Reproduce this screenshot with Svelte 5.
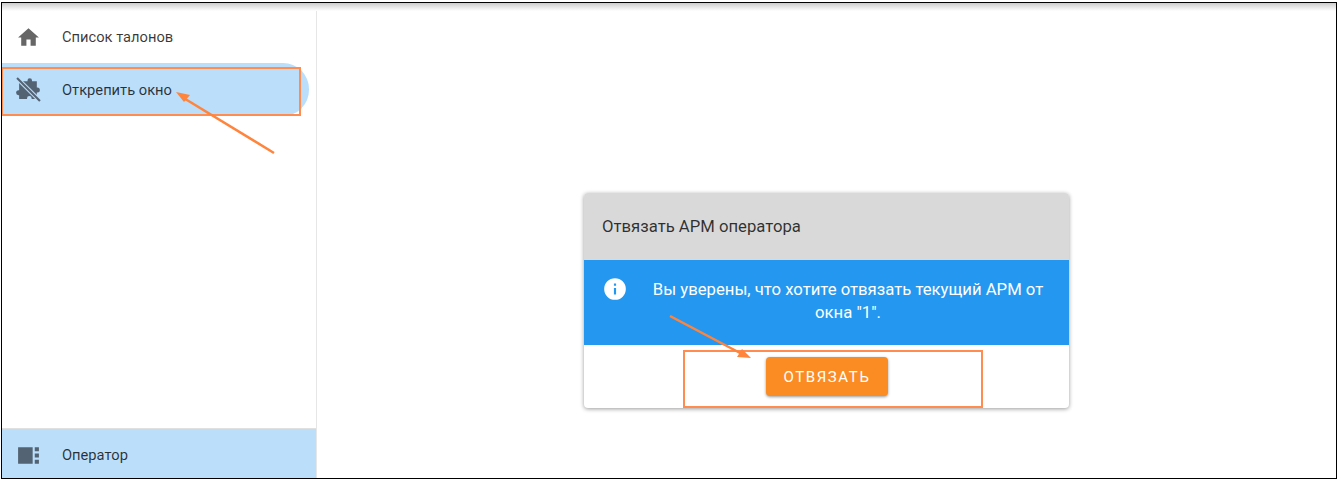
<script>
  const menu = [
    { label: "Список талонов", icon: "M10,20V14H14V20H19V12H22L12,3L2,12H5V20H10Z", active: false },
    { label: "Открепить окно", icon: "puzzle", active: true }
  ];
  const puzzle = "M3 4H11V3.5A2.2 2.2 0 0 1 15.4 3.5V4H20V10H20.5A2.4 2.4 0 0 1 20.5 14.8H20V21H15V20.5A2.2 2.2 0 0 0 10.6 20.5V21H3V17.4H2.5A2.4 2.4 0 0 1 2.5 12.6H3Z";
</script>

<div class="frame">
  <aside class="sidebar">
    <nav class="menu">
      {#each menu as item}
        <div class="item" class:active={item.active}>
          {#if item.icon === "puzzle"}
            <svg class="icon" viewBox="0 0 24 24">
              <path d={puzzle} />
              <path class="slash-bg" d="M1 1L23 23" />
              <path class="slash" d="M1 1L23 23" />
            </svg>
          {:else}
            <svg class="icon" viewBox="0 0 24 24"><path d={item.icon} /></svg>
          {/if}
          <span>{item.label}</span>
        </div>
      {/each}
    </nav>
    <div class="footer">
      <svg class="icon" viewBox="0 0 24 24">
        <path d="M16 20H2V4h14v16zm2-12h4V4h-4v4zm4 8h-4v4h4v-4zm0-6h-4v4h4v-4z" />
      </svg>
      <span>Оператор</span>
    </div>
  </aside>

  <main class="content">
    <section class="card">
      <header class="card-title">Отвязать АРМ оператора</header>
      <div class="alert">
        <svg class="info" viewBox="0 0 24 24">
          <path d="M13,9H11V7H13M13,17H11V11H13M12,2A10,10 0 0,0 2,12A10,10 0 0,0 12,22A10,10 0 0,0 22,12A10,10 0 0,0 12,2Z" />
        </svg>
        <p>Вы уверены, что хотите отвязать текущий АРМ от окна "1".</p>
      </div>
      <div class="actions">
        <button>Отвязать</button>
      </div>
    </section>
  </main>

  <!-- annotations drawn over the screenshot -->
  <svg class="marks" viewBox="0 0 1338 480" width="1338" height="480">
    <rect x="2" y="68" width="298" height="47" />
    <rect x="684" y="351" width="298" height="56" />
    <path d="M274 153L182 97" />
    <path class="head" d="M176 92L190 95L184 102Z" />
    <path d="M670 316L742 354" />
    <path class="head" d="M751 358L737 357L742 349Z" />
  </svg>
</div>

<style>
  :global(body) {
    background: #fff;
  }

  .frame {
    position: relative;
    box-sizing: border-box;
    display: flex;
    width: 1336px;
    height: 477px;
    margin: 2px 0 0 1px;
    border: 1px solid #000;
    background: #fff;
    font-family: Roboto, "Liberation Sans", sans-serif;
    color: rgba(0, 0, 0, 0.78);
    overflow: hidden;
  }

  .frame::before {
    content: "";
    position: absolute;
    left: 0;
    right: 0;
    top: 0;
    height: 8px;
    background: linear-gradient(#ccc, #fff);
  }

  .sidebar {
    width: 314px;
    flex: none;
    display: flex;
    flex-direction: column;
    justify-content: space-between;
    border-right: 1px solid #e6e6e6;
  }

  .menu {
    padding-top: 8px;
  }

  .item {
    display: flex;
    align-items: center;
    height: 52px;
    padding-left: 14px;
    width: 307px;
    box-sizing: border-box;
    font-size: 14.7px;
    border-radius: 0 26px 26px 0;
  }

  .item.active {
    background: #bbdefb;
    height: 53px;
  }

  .icon {
    width: 25px;
    height: 25px;
    margin-right: 21px;
    fill: #666;
    flex: none;
  }

  .active .icon,
  .footer .icon {
    fill: #546373;
  }

  .slash {
    fill: none;
    stroke: #546373;
    stroke-width: 2;
  }

  .slash-bg {
    fill: none;
    stroke: #bbdefb;
    stroke-width: 4;
  }

  .footer {
    display: flex;
    align-items: center;
    height: 50px;
    padding: 3px 0 0 14px;
    background: #bbdefb;
    font-size: 14.7px;
    border-top: 1px solid #e0e0e0;
    box-sizing: border-box;
  }

  .content {
    flex: 1;
    display: flex;
    justify-content: center;
    padding-top: 190px;
  }

  .card {
    width: 485px;
    height: 215px;
    border-radius: 4px;
    overflow: hidden;
    box-shadow: 0 1px 4px rgba(0, 0, 0, 0.4);
    display: flex;
    flex-direction: column;
    background: #fff;
  }

  .card-title {
    height: 67px;
    flex: none;
    display: flex;
    align-items: center;
    padding-left: 18px;
    background: #d9d9d9;
    font-size: 16.7px;
  }

  .alert {
    height: 85px;
    flex: none;
    display: flex;
    align-items: flex-start;
    padding: 16px 17px 0 18px;
    box-sizing: border-box;
    background: #2498f0;
    color: #fff;
  }

  .info {
    width: 26px;
    height: 26px;
    fill: #fff;
    flex: none;
  }

  .alert p {
    flex: 1;
    margin: 2px 0 0;
    padding-left: 16px;
    text-align: center;
    font-size: 16.7px;
    line-height: 23px;
  }

  .actions {
    flex: 1;
    display: flex;
    justify-content: center;
    padding-top: 12px;
  }

  button {
    width: 122px;
    height: 39px;
    border: none;
    border-radius: 4px;
    background: #fb8c24;
    color: #fff;
    font-family: inherit;
    font-size: 15px;
    font-weight: 400;
    letter-spacing: 1.6px;
    text-indent: 1px;
    text-transform: uppercase;
    box-shadow: 0 1px 3px rgba(0, 0, 0, 0.4);
  }

  .marks {
    position: absolute;
    left: -2px;
    top: -3px;
    pointer-events: none;
  }

  .marks rect {
    fill: none;
    stroke: #ff8c50;
    stroke-width: 2;
  }

  .marks path {
    fill: none;
    stroke: #ff843c;
    stroke-width: 2.5;
  }

  .marks .head {
    fill: #ff843c;
    stroke: none;
  }
</style>
